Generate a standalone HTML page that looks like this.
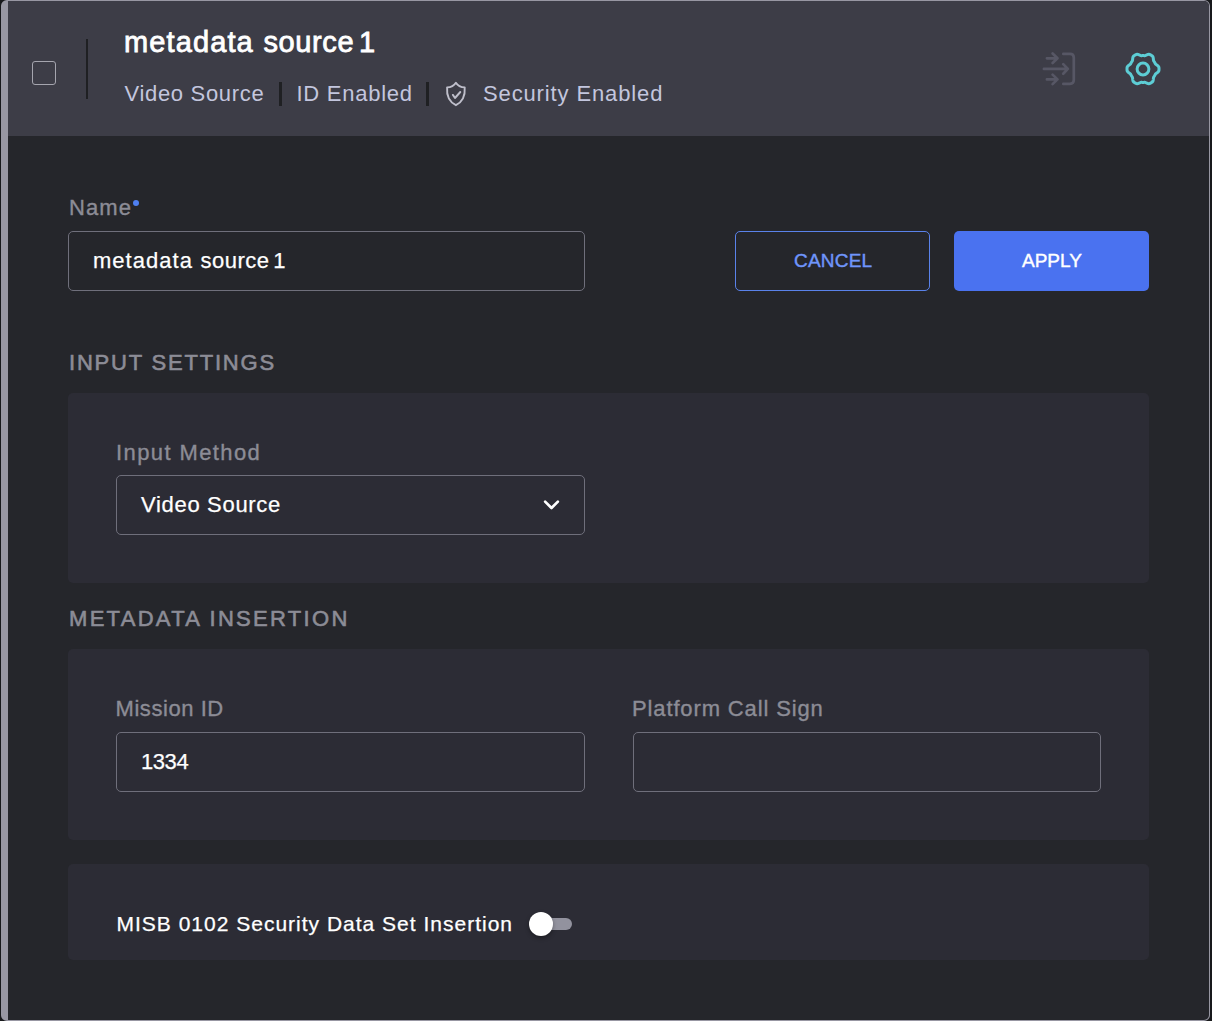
<!DOCTYPE html>
<html>
<head>
<meta charset="utf-8">
<style>
html,body{margin:0;padding:0;}
body{width:1212px;height:1021px;overflow:hidden;background:#18191c;position:relative;font-family:"Liberation Sans",sans-serif;}
.card{position:absolute;left:1px;top:0;width:1209px;height:1021px;box-sizing:border-box;border:1px solid #9897a3;border-left:7px solid #9897a3;border-radius:6px;background:#25262b;overflow:hidden;}
.hdr{position:absolute;left:8px;top:1px;width:1201px;height:135px;background:#3d3d47;border-top-right-radius:5px;}
.t{position:absolute;white-space:nowrap;line-height:1;}
.box{position:absolute;box-sizing:border-box;}
.inp{position:absolute;box-sizing:border-box;border:1.5px solid #6f6f7b;border-radius:5px;}
.panel{position:absolute;left:68px;width:1081px;background:#2c2c35;border-radius:5px;}
.lbl{color:#8c8c96;font-size:22px;-webkit-text-stroke:0.35px #8c8c96;}
.val{color:#ffffff;font-size:22px;-webkit-text-stroke:0.25px #ffffff;}
.sec{color:#8c8c96;font-size:22px;-webkit-text-stroke:0.6px #8c8c96;}
.sub{color:#c3c6de;font-size:22px;top:83px;}
.ttl{top:28px;font-size:29px;color:#ffffff;letter-spacing:0.6px;-webkit-text-stroke:0.8px #ffffff;}
.vdiv{position:absolute;background:#1f2023;}
</style>
</head>
<body>
<div class="card"></div>
<div class="hdr"></div>

<!-- checkbox -->
<div class="box" style="left:32px;top:61px;width:24px;height:24px;border:1.6px solid #a5a5ae;border-radius:3px;"></div>
<!-- vertical divider -->
<div class="vdiv" style="left:86px;top:39px;width:2px;height:60px;"></div>

<!-- title -->
<div class="t ttl" style="left:124px;letter-spacing:1.11px;">metadata</div>
<div class="t ttl" style="left:263.5px;">source</div>
<div class="t ttl" style="left:359px;">1</div>

<!-- subtitle -->
<div class="t sub" style="left:124.5px;letter-spacing:0.68px;">Video Source</div>
<div class="vdiv" style="left:279px;top:82px;width:3px;height:24px;background:#1f2023;"></div>
<div class="t sub" style="left:296.5px;letter-spacing:0.74px;">ID Enabled</div>
<div class="vdiv" style="left:426px;top:82px;width:3px;height:24px;background:#1f2023;"></div>
<svg style="position:absolute;left:436px;top:76px" width="40" height="36" viewBox="0 0 40 36">
  <path d="M19.9 6.7 C21.6 9.4 24.6 11.2 28.7 11.4 C29.3 19.3 26.3 26 19.9 29.2 C13.5 26 10.5 19.3 11.1 11.4 C15.2 11.2 18.2 9.4 19.9 6.7 Z" fill="none" stroke="#bfbfcb" stroke-width="1.9" stroke-linejoin="round"/>
  <path d="M16.9 18.9 L19.0 22.0 L24.3 16.0" fill="none" stroke="#bfbfcb" stroke-width="1.9" stroke-linecap="round" stroke-linejoin="round"/>
</svg>
<div class="t sub" style="left:483px;letter-spacing:0.87px;">Security Enabled</div>

<!-- import icon -->
<svg style="position:absolute;left:1030px;top:40px" width="60" height="60" viewBox="0 0 60 60">
  <g fill="none" stroke="#575765" stroke-width="2.7" stroke-linecap="round" stroke-linejoin="round">
    <path d="M33.3 13.9 H40 Q43.8 13.9 43.8 17.7 V40.1 Q43.8 43.9 40 43.9 H33.3"/>
    <path d="M16.9 18.3 H27.3 M22.6 13.5 L27.5 18.3 L22.6 23"/>
    <path d="M13.9 28.9 H37.7 M33.2 24.1 L37.9 28.9 L33.2 33.7"/>
    <path d="M16.9 39.4 H27.3 M22.6 34.6 L27.5 39.4 L22.6 44.1"/>
  </g>
</svg>

<!-- gear icon -->
<svg id="gear" style="position:absolute;left:1113px;top:39px" width="60" height="60" viewBox="0 0 60 60">
  <path id="gearpath" d="M46.00 30.00 L46.00 29.86 L46.00 29.72 L45.99 29.58 L45.99 29.44 L45.98 29.30 L45.98 29.16 L45.97 29.02 L45.96 28.88 L45.95 28.74 L45.94 28.61 L45.92 28.47 L45.89 28.33 L45.85 28.19 L45.80 28.06 L45.74 27.93 L45.67 27.80 L45.59 27.67 L45.51 27.54 L45.42 27.42 L45.32 27.30 L45.21 27.18 L45.10 27.06 L44.99 26.95 L44.87 26.84 L44.75 26.73 L44.62 26.62 L44.49 26.52 L44.36 26.42 L44.23 26.32 L44.10 26.22 L43.97 26.13 L43.84 26.03 L43.71 25.94 L43.58 25.85 L43.45 25.76 L43.33 25.67 L43.21 25.58 L43.09 25.49 L42.98 25.40 L42.87 25.32 L42.77 25.23 L42.67 25.14 L42.58 25.04 L42.50 24.95 L42.42 24.85 L42.35 24.76 L42.29 24.65 L42.24 24.55 L42.19 24.44 L42.14 24.34 L42.09 24.23 L42.04 24.13 L41.99 24.02 L41.94 23.92 L41.89 23.81 L41.83 23.71 L41.78 23.61 L41.72 23.50 L41.66 23.40 L41.60 23.30 L41.55 23.20 L41.49 23.10 L41.43 23.00 L41.36 22.90 L41.30 22.80 L41.24 22.70 L41.17 22.60 L41.11 22.51 L41.04 22.41 L40.98 22.31 L40.91 22.22 L40.84 22.12 L40.78 22.03 L40.72 21.92 L40.67 21.81 L40.62 21.70 L40.58 21.58 L40.55 21.46 L40.52 21.33 L40.49 21.20 L40.47 21.06 L40.45 20.92 L40.43 20.77 L40.41 20.62 L40.40 20.47 L40.38 20.32 L40.37 20.16 L40.35 20.00 L40.34 19.84 L40.32 19.68 L40.30 19.52 L40.28 19.35 L40.26 19.19 L40.23 19.03 L40.20 18.86 L40.17 18.70 L40.13 18.54 L40.09 18.39 L40.05 18.23 L40.00 18.08 L39.94 17.94 L39.88 17.80 L39.82 17.66 L39.74 17.53 L39.67 17.40 L39.58 17.29 L39.49 17.18 L39.39 17.07 L39.29 16.98 L39.18 16.89 L39.06 16.81 L38.95 16.74 L38.83 16.66 L38.71 16.58 L38.60 16.51 L38.48 16.43 L38.36 16.36 L38.24 16.29 L38.12 16.21 L38.00 16.14 L37.88 16.07 L37.76 16.01 L37.63 15.94 L37.51 15.87 L37.39 15.81 L37.26 15.74 L37.14 15.68 L37.01 15.62 L36.89 15.56 L36.76 15.50 L36.63 15.45 L36.50 15.40 L36.36 15.37 L36.22 15.35 L36.08 15.33 L35.93 15.33 L35.78 15.33 L35.63 15.34 L35.47 15.36 L35.32 15.38 L35.16 15.41 L35.01 15.45 L34.85 15.50 L34.70 15.54 L34.54 15.59 L34.39 15.65 L34.23 15.71 L34.08 15.77 L33.93 15.83 L33.78 15.90 L33.63 15.97 L33.48 16.03 L33.34 16.10 L33.19 16.17 L33.05 16.23 L32.91 16.29 L32.78 16.35 L32.64 16.41 L32.51 16.46 L32.38 16.51 L32.25 16.55 L32.12 16.59 L32.00 16.63 L31.88 16.65 L31.76 16.67 L31.64 16.68 L31.52 16.68 L31.40 16.67 L31.28 16.66 L31.17 16.65 L31.05 16.64 L30.93 16.63 L30.82 16.62 L30.70 16.62 L30.58 16.61 L30.47 16.61 L30.35 16.60 L30.23 16.60 L30.12 16.60 L30.00 16.60 L29.88 16.60 L29.77 16.60 L29.65 16.60 L29.53 16.61 L29.42 16.61 L29.30 16.62 L29.18 16.62 L29.07 16.63 L28.95 16.64 L28.83 16.65 L28.72 16.66 L28.60 16.67 L28.48 16.68 L28.36 16.68 L28.24 16.67 L28.12 16.65 L28.00 16.63 L27.88 16.59 L27.75 16.55 L27.62 16.51 L27.49 16.46 L27.36 16.41 L27.22 16.35 L27.09 16.29 L26.95 16.23 L26.81 16.17 L26.66 16.10 L26.52 16.03 L26.37 15.97 L26.22 15.90 L26.07 15.83 L25.92 15.77 L25.77 15.71 L25.61 15.65 L25.46 15.59 L25.30 15.54 L25.15 15.50 L24.99 15.45 L24.84 15.41 L24.68 15.38 L24.53 15.36 L24.37 15.34 L24.22 15.33 L24.07 15.33 L23.92 15.33 L23.78 15.35 L23.64 15.37 L23.50 15.40 L23.37 15.45 L23.24 15.50 L23.11 15.56 L22.99 15.62 L22.86 15.68 L22.74 15.74 L22.61 15.81 L22.49 15.87 L22.37 15.94 L22.24 16.01 L22.12 16.07 L22.00 16.14 L21.88 16.21 L21.76 16.29 L21.64 16.36 L21.52 16.43 L21.40 16.51 L21.29 16.58 L21.17 16.66 L21.05 16.74 L20.94 16.81 L20.82 16.89 L20.71 16.98 L20.61 17.07 L20.51 17.18 L20.42 17.29 L20.33 17.40 L20.26 17.53 L20.18 17.66 L20.12 17.80 L20.06 17.94 L20.00 18.08 L19.95 18.23 L19.91 18.39 L19.87 18.54 L19.83 18.70 L19.80 18.86 L19.77 19.03 L19.74 19.19 L19.72 19.35 L19.70 19.52 L19.68 19.68 L19.66 19.84 L19.65 20.00 L19.63 20.16 L19.62 20.32 L19.60 20.47 L19.59 20.62 L19.57 20.77 L19.55 20.92 L19.53 21.06 L19.51 21.20 L19.48 21.33 L19.45 21.46 L19.42 21.58 L19.38 21.70 L19.33 21.81 L19.28 21.92 L19.22 22.03 L19.16 22.12 L19.09 22.22 L19.02 22.31 L18.96 22.41 L18.89 22.51 L18.83 22.60 L18.76 22.70 L18.70 22.80 L18.64 22.90 L18.57 23.00 L18.51 23.10 L18.45 23.20 L18.40 23.30 L18.34 23.40 L18.28 23.50 L18.22 23.61 L18.17 23.71 L18.11 23.81 L18.06 23.92 L18.01 24.02 L17.96 24.13 L17.91 24.23 L17.86 24.34 L17.81 24.44 L17.76 24.55 L17.71 24.65 L17.65 24.76 L17.58 24.85 L17.50 24.95 L17.42 25.04 L17.33 25.14 L17.23 25.23 L17.13 25.32 L17.02 25.40 L16.91 25.49 L16.79 25.58 L16.67 25.67 L16.55 25.76 L16.42 25.85 L16.29 25.94 L16.16 26.03 L16.03 26.13 L15.90 26.22 L15.77 26.32 L15.64 26.42 L15.51 26.52 L15.38 26.62 L15.25 26.73 L15.13 26.84 L15.01 26.95 L14.90 27.06 L14.79 27.18 L14.68 27.30 L14.58 27.42 L14.49 27.54 L14.41 27.67 L14.33 27.80 L14.26 27.93 L14.20 28.06 L14.15 28.19 L14.11 28.33 L14.08 28.47 L14.06 28.61 L14.05 28.74 L14.04 28.88 L14.03 29.02 L14.02 29.16 L14.02 29.30 L14.01 29.44 L14.01 29.58 L14.00 29.72 L14.00 29.86 L14.00 30.00 L14.00 30.14 L14.00 30.28 L14.01 30.42 L14.01 30.56 L14.02 30.70 L14.02 30.84 L14.03 30.98 L14.04 31.12 L14.05 31.26 L14.06 31.39 L14.08 31.53 L14.11 31.67 L14.15 31.81 L14.20 31.94 L14.26 32.07 L14.33 32.20 L14.41 32.33 L14.49 32.46 L14.58 32.58 L14.68 32.70 L14.79 32.82 L14.90 32.94 L15.01 33.05 L15.13 33.16 L15.25 33.27 L15.38 33.38 L15.51 33.48 L15.64 33.58 L15.77 33.68 L15.90 33.78 L16.03 33.87 L16.16 33.97 L16.29 34.06 L16.42 34.15 L16.55 34.24 L16.67 34.33 L16.79 34.42 L16.91 34.51 L17.02 34.60 L17.13 34.68 L17.23 34.77 L17.33 34.86 L17.42 34.96 L17.50 35.05 L17.58 35.15 L17.65 35.24 L17.71 35.35 L17.76 35.45 L17.81 35.56 L17.86 35.66 L17.91 35.77 L17.96 35.87 L18.01 35.98 L18.06 36.08 L18.11 36.19 L18.17 36.29 L18.22 36.39 L18.28 36.50 L18.34 36.60 L18.40 36.70 L18.45 36.80 L18.51 36.90 L18.57 37.00 L18.64 37.10 L18.70 37.20 L18.76 37.30 L18.83 37.40 L18.89 37.49 L18.96 37.59 L19.02 37.69 L19.09 37.78 L19.16 37.88 L19.22 37.97 L19.28 38.08 L19.33 38.19 L19.38 38.30 L19.42 38.42 L19.45 38.54 L19.48 38.67 L19.51 38.80 L19.53 38.94 L19.55 39.08 L19.57 39.23 L19.59 39.38 L19.60 39.53 L19.62 39.68 L19.63 39.84 L19.65 40.00 L19.66 40.16 L19.68 40.32 L19.70 40.48 L19.72 40.65 L19.74 40.81 L19.77 40.97 L19.80 41.14 L19.83 41.30 L19.87 41.46 L19.91 41.61 L19.95 41.77 L20.00 41.92 L20.06 42.06 L20.12 42.20 L20.18 42.34 L20.26 42.47 L20.33 42.60 L20.42 42.71 L20.51 42.82 L20.61 42.93 L20.71 43.02 L20.82 43.11 L20.94 43.19 L21.05 43.26 L21.17 43.34 L21.29 43.42 L21.40 43.49 L21.52 43.57 L21.64 43.64 L21.76 43.71 L21.88 43.79 L22.00 43.86 L22.12 43.93 L22.24 43.99 L22.37 44.06 L22.49 44.13 L22.61 44.19 L22.74 44.26 L22.86 44.32 L22.99 44.38 L23.11 44.44 L23.24 44.50 L23.37 44.55 L23.50 44.60 L23.64 44.63 L23.78 44.65 L23.92 44.67 L24.07 44.67 L24.22 44.67 L24.37 44.66 L24.53 44.64 L24.68 44.62 L24.84 44.59 L24.99 44.55 L25.15 44.50 L25.30 44.46 L25.46 44.41 L25.61 44.35 L25.77 44.29 L25.92 44.23 L26.07 44.17 L26.22 44.10 L26.37 44.03 L26.52 43.97 L26.66 43.90 L26.81 43.83 L26.95 43.77 L27.09 43.71 L27.22 43.65 L27.36 43.59 L27.49 43.54 L27.62 43.49 L27.75 43.45 L27.88 43.41 L28.00 43.37 L28.12 43.35 L28.24 43.33 L28.36 43.32 L28.48 43.32 L28.60 43.33 L28.72 43.34 L28.83 43.35 L28.95 43.36 L29.07 43.37 L29.18 43.38 L29.30 43.38 L29.42 43.39 L29.53 43.39 L29.65 43.40 L29.77 43.40 L29.88 43.40 L30.00 43.40 L30.12 43.40 L30.23 43.40 L30.35 43.40 L30.47 43.39 L30.58 43.39 L30.70 43.38 L30.82 43.38 L30.93 43.37 L31.05 43.36 L31.17 43.35 L31.28 43.34 L31.40 43.33 L31.52 43.32 L31.64 43.32 L31.76 43.33 L31.88 43.35 L32.00 43.37 L32.12 43.41 L32.25 43.45 L32.38 43.49 L32.51 43.54 L32.64 43.59 L32.78 43.65 L32.91 43.71 L33.05 43.77 L33.19 43.83 L33.34 43.90 L33.48 43.97 L33.63 44.03 L33.78 44.10 L33.93 44.17 L34.08 44.23 L34.23 44.29 L34.39 44.35 L34.54 44.41 L34.70 44.46 L34.85 44.50 L35.01 44.55 L35.16 44.59 L35.32 44.62 L35.47 44.64 L35.63 44.66 L35.78 44.67 L35.93 44.67 L36.08 44.67 L36.22 44.65 L36.36 44.63 L36.50 44.60 L36.63 44.55 L36.76 44.50 L36.89 44.44 L37.01 44.38 L37.14 44.32 L37.26 44.26 L37.39 44.19 L37.51 44.13 L37.63 44.06 L37.76 43.99 L37.88 43.93 L38.00 43.86 L38.12 43.79 L38.24 43.71 L38.36 43.64 L38.48 43.57 L38.60 43.49 L38.71 43.42 L38.83 43.34 L38.95 43.26 L39.06 43.19 L39.18 43.11 L39.29 43.02 L39.39 42.93 L39.49 42.82 L39.58 42.71 L39.67 42.60 L39.74 42.47 L39.82 42.34 L39.88 42.20 L39.94 42.06 L40.00 41.92 L40.05 41.77 L40.09 41.61 L40.13 41.46 L40.17 41.30 L40.20 41.14 L40.23 40.97 L40.26 40.81 L40.28 40.65 L40.30 40.48 L40.32 40.32 L40.34 40.16 L40.35 40.00 L40.37 39.84 L40.38 39.68 L40.40 39.53 L40.41 39.38 L40.43 39.23 L40.45 39.08 L40.47 38.94 L40.49 38.80 L40.52 38.67 L40.55 38.54 L40.58 38.42 L40.62 38.30 L40.67 38.19 L40.72 38.08 L40.78 37.97 L40.84 37.88 L40.91 37.78 L40.98 37.69 L41.04 37.59 L41.11 37.49 L41.17 37.40 L41.24 37.30 L41.30 37.20 L41.36 37.10 L41.43 37.00 L41.49 36.90 L41.55 36.80 L41.60 36.70 L41.66 36.60 L41.72 36.50 L41.78 36.39 L41.83 36.29 L41.89 36.19 L41.94 36.08 L41.99 35.98 L42.04 35.87 L42.09 35.77 L42.14 35.66 L42.19 35.56 L42.24 35.45 L42.29 35.35 L42.35 35.24 L42.42 35.15 L42.50 35.05 L42.58 34.96 L42.67 34.86 L42.77 34.77 L42.87 34.68 L42.98 34.60 L43.09 34.51 L43.21 34.42 L43.33 34.33 L43.45 34.24 L43.58 34.15 L43.71 34.06 L43.84 33.97 L43.97 33.87 L44.10 33.78 L44.23 33.68 L44.36 33.58 L44.49 33.48 L44.62 33.38 L44.75 33.27 L44.87 33.16 L44.99 33.05 L45.10 32.94 L45.21 32.82 L45.32 32.70 L45.42 32.58 L45.51 32.46 L45.59 32.33 L45.67 32.20 L45.74 32.07 L45.80 31.94 L45.85 31.81 L45.89 31.67 L45.92 31.53 L45.94 31.39 L45.95 31.26 L45.96 31.12 L45.97 30.98 L45.98 30.84 L45.98 30.70 L45.99 30.56 L45.99 30.42 L46.00 30.28 L46.00 30.14 Z" fill="none" stroke="#5dcdd5" stroke-width="3" stroke-linejoin="round"/>
  <circle cx="30" cy="30" r="5.9" fill="none" stroke="#5dcdd5" stroke-width="3"/>
</svg>

<!-- Name -->
<div class="t lbl" style="left:69px;top:197px;letter-spacing:1.1px;">Name</div>
<div class="box" style="left:133px;top:200px;width:6px;height:6px;border-radius:50%;background:#4f7ff0;"></div>
<div class="inp" style="left:68px;top:231px;width:517px;height:60px;"></div>
<div class="t val" style="left:93px;top:250px;letter-spacing:1.03px;">metadata</div>
<div class="t val" style="left:200.5px;top:250px;letter-spacing:0.5px;">source</div>
<div class="t val" style="left:273.3px;top:250px;">1</div>

<!-- buttons -->
<div class="box" style="left:735px;top:231px;width:195px;height:60px;border:1.5px solid #5a82ea;border-radius:5px;"></div>
<div class="t" style="left:794px;top:251px;font-size:19px;color:#6f95fb;letter-spacing:0.2px;-webkit-text-stroke:0.4px #6f95fb;">CANCEL</div>
<div class="box" style="left:954px;top:231px;width:195px;height:60px;background:#4a72f0;border-radius:5px;"></div>
<div class="t" style="left:1022px;top:251px;font-size:19px;color:#ffffff;letter-spacing:0px;-webkit-text-stroke:0.4px #ffffff;">APPLY</div>

<!-- INPUT SETTINGS -->
<div class="t sec" style="left:69px;top:352px;letter-spacing:1.8px;">INPUT SETTINGS</div>
<div class="panel" style="top:393px;height:190px;"></div>
<div class="t lbl" style="left:116px;top:442px;letter-spacing:1.4px;">Input Method</div>
<div class="inp" style="left:116px;top:475px;width:469px;height:60px;"></div>
<div class="t val" style="left:141px;top:494px;letter-spacing:0.69px;">Video Source</div>
<svg style="position:absolute;left:540px;top:495px" width="24" height="20" viewBox="0 0 24 20">
  <path d="M5.1 6.6 L11.5 13.0 L17.9 6.6" fill="none" stroke="#ffffff" stroke-width="2.7" stroke-linecap="round" stroke-linejoin="round"/>
</svg>

<!-- METADATA INSERTION -->
<div class="t sec" style="left:69px;top:608px;letter-spacing:2.3px;">METADATA INSERTION</div>
<div class="panel" style="top:649px;height:191px;"></div>
<div class="t lbl" style="left:115.5px;top:698px;letter-spacing:0.56px;">Mission ID</div>
<div class="inp" style="left:116px;top:732px;width:469px;height:60px;"></div>
<div class="t val" style="left:141px;top:751px;letter-spacing:-0.43px;">1334</div>
<div class="t lbl" style="left:632px;top:698px;letter-spacing:0.87px;">Platform Call Sign</div>
<div class="inp" style="left:633px;top:732px;width:468px;height:60px;"></div>

<!-- MISB -->
<div class="panel" style="top:864px;height:96px;"></div>
<div class="t val" style="left:116.5px;top:913px;font-size:21px;letter-spacing:1.0px;">MISB 0102 Security Data Set Insertion</div>
<div class="box" style="left:535px;top:918px;width:37px;height:12px;border-radius:6px;background:#92929e;"></div>
<div class="box" style="left:529px;top:912px;width:24px;height:24px;border-radius:50%;background:#ffffff;box-shadow:0 2px 4px rgba(0,0,0,0.35);"></div>

</body>
</html>
